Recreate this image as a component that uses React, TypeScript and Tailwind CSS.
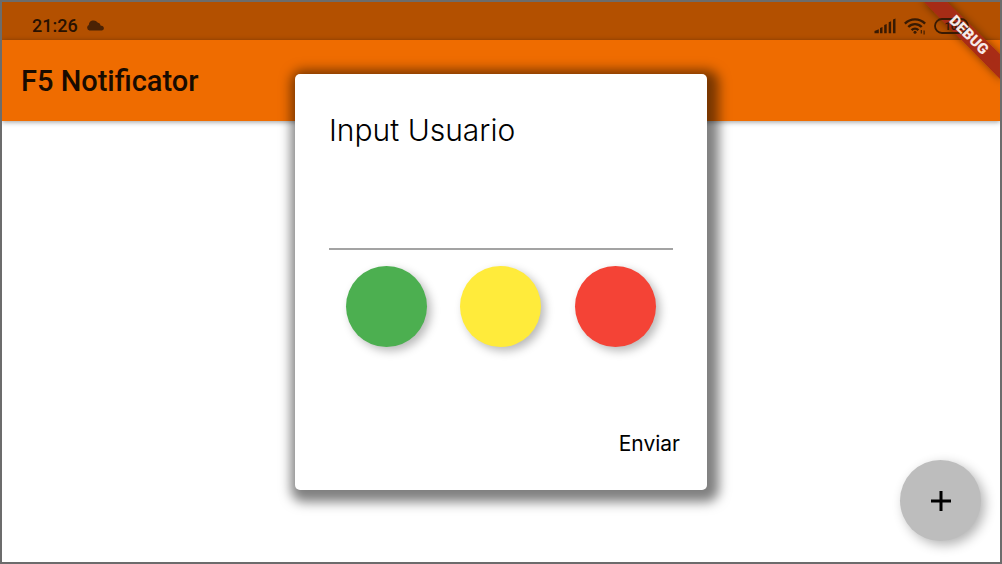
import { useState } from "react";

function CloudIcon() {
  return (
    <svg viewBox="0 0 18 12" className="h-3 w-[18px] fill-[#4b2204]" aria-hidden="true">
      <path d="M3.500 10.500A3 3 0 0 1 2.800 4.900 4.800 4.800 0 0 1 11.600 2.600 4 4 0 0 1 14.800 5.800 2.400 2.400 0 0 1 16 10.500Z" />
    </svg>
  );
}

function SignalIcon() {
  return (
    <svg viewBox="0 0 22 16" className="h-4 w-[22px] fill-[#381a03]" aria-hidden="true">
      <path d="M.5 15.300v-2.300l4.300-1.700v4ZM6 15.300V10l2.500-1v6.300ZM10.200 15.300V7l2.500-1v9.300ZM14.700 15.300V4.300l2.400-1v12ZM19 15.300V1.600l2.500-1v14.700Z" />
    </svg>
  );
}

function WifiIcon() {
  return (
    <svg viewBox="0 0 22 18" className="h-[18px] w-[22px] fill-none stroke-[#381a03]" strokeWidth="2.400" aria-hidden="true">
      <path d="M.9 6.600C6.500.9 15.500.9 21.100 6.600M4.300 10c3.800-3.800 9.600-3.800 13.400 0M7.600 13.200c2-2 4.800-2 6.800 0" />
      <circle cx="11" cy="15.300" r="1.500" className="fill-[#381a03]" stroke="none" />
      <path strokeWidth="1.100" d="M17.300 13v3.500M20.100 13.500v4" />
    </svg>
  );
}

function BatteryIcon() {
  return (
    <svg viewBox="0 0 36 16" className="h-4 w-9" aria-hidden="true">
      <rect x="1" y="1" width="33" height="14" rx="7" className="fill-none stroke-[#381a03]" strokeWidth="1.800" />
      <text x="20" y="12" textAnchor="middle" className="fill-[#381a03] font-['Roboto',sans-serif] text-[11px] font-bold">100</text>
    </svg>
  );
}

function DebugRibbon() {
  return (
    <svg viewBox="0 0 90 90" className="pointer-events-none absolute top-0 right-0 size-[90px]" aria-hidden="true">
      <defs>
        <filter id="ribbon-shadow" x="-20%" y="-20%" width="140%" height="140%">
          <feDropShadow dx="0" dy="0" stdDeviation="4" floodOpacity="0.5" />
        </filter>
      </defs>
      <path d="M12 -2H35L92 54V79Z" fill="#a82a18" fillOpacity="0.96" filter="url(#ribbon-shadow)" />
    </svg>
  );
}

function DebugLabel() {
  return (
    <svg viewBox="0 0 90 90" className="pointer-events-none absolute top-0 right-0 z-20 size-[90px]">
      <text transform="translate(59 33) rotate(45)" y="5" textAnchor="middle" className="fill-white/90 font-['Roboto',sans-serif] text-[15px] font-black">DEBUG</text>
    </svg>
  );
}

const colors = [
  { name: "Verde", fill: "bg-[#4caf50]" },
  { name: "Amarillo", fill: "bg-[#ffeb3b]" },
  { name: "Rojo", fill: "bg-[#f44336]" },
];

export default function App() {
  const [message, setMessage] = useState("");
  return (
    <div className="relative flex min-h-screen flex-col overflow-hidden border-2 border-[#6c6c6c] bg-white font-['Roboto',sans-serif] text-black">
      <div className="flex h-[38px] items-center justify-between bg-[#b35000] px-[30px] pt-2.5">
        <div className="flex items-center gap-2">
          <span className="text-lg leading-6 font-medium text-[#281102]">21:26</span>
          <CloudIcon />
        </div>
        <div className="relative z-10 flex items-center gap-2">
          <SignalIcon />
          <WifiIcon />
          <BatteryIcon />
        </div>
      </div>
      <header className="flex h-[81px] items-center bg-[#ef6c00] px-[19px] shadow-[0_1px_5px_rgba(0,0,0,0.4)]">
        <h1 className="text-[29px] leading-9 font-medium text-[#180b00]">F5 Notificator</h1>
      </header>
      <DebugRibbon />
      <DebugLabel />

      <button type="button" aria-label="Agregar" className="absolute right-[19px] bottom-[21px] flex size-[81px] items-center justify-center rounded-full bg-[#bdbdbd] shadow-[4px_4px_12px_rgba(0,0,0,0.3)]">
        <svg viewBox="0 0 20 20" className="size-5 stroke-black" strokeWidth="3" aria-hidden="true">
          <path d="M10 0v20M0 10h20" />
        </svg>
      </button>

      <div className="absolute inset-0 flex items-center justify-center">
        <form
          role="dialog"
          aria-labelledby="dialog-title"
          onSubmit={(event) => event.preventDefault()}
          className="flex w-[412px] max-w-full flex-col rounded-[5px] bg-white px-[34px] pt-9 pb-7 font-['Inter','Open_Sans',sans-serif] shadow-[4px_4px_12px_8px_rgba(0,0,0,0.5)]"
        >
          <label id="dialog-title" htmlFor="message" className="text-[30px] leading-10 font-light">Input Usuario</label>
          <input
            id="message"
            value={message}
            onChange={(event) => setMessage(event.target.value)}
            className="mt-10 h-[60px] w-full border-b-2 border-[#a3a3a3] text-xl outline-none"
          />
          <div className="mt-4 flex justify-around">
            {colors.map((color) => (
              <button key={color.name} type="button" aria-label={color.name} className={`size-[81px] rounded-full shadow-[4px_4px_10px_rgba(0,0,0,0.28)] ${color.fill}`} />
            ))}
          </div>
          <button type="submit" className="mt-[79px] -mr-[7px] self-end text-[21px] leading-9">Enviar</button>
        </form>
      </div>
    </div>
  );
}
